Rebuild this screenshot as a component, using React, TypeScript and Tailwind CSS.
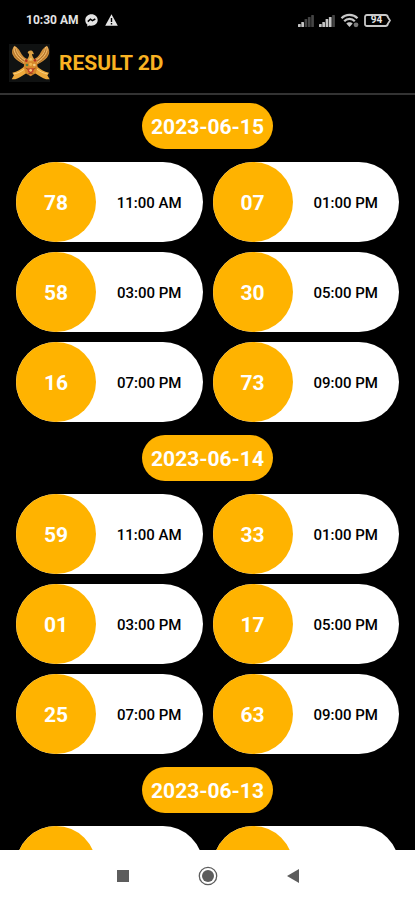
type Result = {
  number: string;
  time: string;
};

type ResultDay = {
  date: string;
  results: Result[];
};

const days: ResultDay[] = [
  {
    date: '2023-06-15',
    results: [
      { number: '78', time: '11:00 AM' },
      { number: '07', time: '01:00 PM' },
      { number: '58', time: '03:00 PM' },
      { number: '30', time: '05:00 PM' },
      { number: '16', time: '07:00 PM' },
      { number: '73', time: '09:00 PM' },
    ],
  },
  {
    date: '2023-06-14',
    results: [
      { number: '59', time: '11:00 AM' },
      { number: '33', time: '01:00 PM' },
      { number: '01', time: '03:00 PM' },
      { number: '17', time: '05:00 PM' },
      { number: '25', time: '07:00 PM' },
      { number: '63', time: '09:00 PM' },
    ],
  },
  {
    date: '2023-06-13',
    results: [
      { number: '', time: '' },
      { number: '', time: '' },
    ],
  },
];

function SignalIcon({ active }: { active: number }) {
  const bars = [3, 5, 8, 10, 12];
  return (
    <svg width="17" height="13" viewBox="0 0 17 13" aria-hidden="true">
      {bars.map((height, i) => (
        <rect
          key={height}
          x={i * 3.3}
          y={13 - height}
          width="2.7"
          height={height}
          rx="0.6"
          fill={i < active ? '#c4c4c4' : '#444444'}
        />
      ))}
    </svg>
  );
}

function StatusBar() {
  return (
    <div className="flex h-10 shrink-0 items-center justify-between pl-[26px] pr-6 text-[#e4e4e4]">
      <div className="flex items-center gap-[7px]">
        <span className="text-xs font-bold">10:30 AM</span>
        <svg width="13" height="13" viewBox="0 0 13 13" aria-hidden="true">
          <path
            d="M6.5 .3C2.9 .3 .3 2.9 .3 6.2c0 1.8.8 3.3 2 4.4v1.9l1.9-1c.7.2 1.5.3 2.3.3 3.6 0 6.2-2.500 6.200-5.700S10.100.3 6.500.3z"
            fill="currentColor"
          />
          <path
            d="M2.800 7.600 5.400 5.200l2 1.400 2.900-1.600"
            fill="none"
            stroke="#000"
            strokeWidth="1.500"
          />
        </svg>
        <svg width="13" height="12" viewBox="0 0 13 12" aria-hidden="true">
          <path d="M6.500 .3 12.800 11.700H.2z" fill="currentColor" />
          <path d="M6.500 4v4M6.500 9v1.400" stroke="#000" strokeWidth="1.400" />
        </svg>
      </div>

      <div className="flex items-center gap-1">
        <SignalIcon active={2} />
        <SignalIcon active={4} />
        <svg width="20" height="15" viewBox="0 0 20 15" aria-hidden="true">
          <g fill="none" stroke="#c8c8c8" strokeWidth="2.200">
            <path d="M1.500 5.200C5.800 .7 13.200 .7 17.500 5.200" />
            <path d="M4.200 8.200C7 5.200 12 5.200 14.800 8.200" />
          </g>
          <path d="M6.300 10.600c1.700-1.800 4.700-1.800 6.400 0L9.500 14z" fill="#c8c8c8" />
          <circle cx="16" cy="11.800" r="2.400" fill="#777" />
        </svg>
        <div className="relative flex h-[13px] w-[27px] items-center justify-center">
          <svg
            className="absolute inset-0"
            width="27"
            height="13"
            viewBox="0 0 27 13"
            aria-hidden="true"
          >
            <path
              d="M3 1h18.500c1.500 0 2.200 1 2.500 2.500l2 3-2 3C23.700 11 23 12 21.500 12H3c-1.400 0-2-.8-2-2V3c0-1.200.6-2 2-2z"
              fill="none"
              stroke="#c8c8c8"
              strokeWidth="1.800"
            />
          </svg>
          <span className="pr-[2px] text-[10px] leading-none font-bold">94</span>
        </div>
      </div>
    </div>
  );
}

function EagleWing() {
  return (
    <g>
      <path
        d="M17 5C9 13 7 25 12 34C16 43 24 50 36 56L50 64L56 46C48 42 42 38 38 31C34 22 28 12 17 5z"
        fill="#d08f3a"
      />
      <path
        d="M16 8C13 24 22 38 46 56M20 9C21 24 31 38 50 49"
        fill="none"
        stroke="#f0bd70"
        strokeWidth="3"
      />
      <path
        d="M12 20C15 36 27 47 42 56M19 14C21 30 31 42 46 51"
        fill="none"
        stroke="#8f541c"
        strokeWidth="1.500"
      />
    </g>
  );
}

function RibbonEnd() {
  return (
    <g>
      <path d="M48 66C36 76 25 84 10 86l5 8-7 12c12 1 24-5 32-11l14-9z" fill="#eda93c" />
      <path d="M14 90c13-2 25-8 36-18" fill="none" stroke="#fbd68c" strokeWidth="2.500" />
    </g>
  );
}

function EagleLogo() {
  return (
    <svg width="41" height="38" viewBox="0 0 123 114" role="img" aria-label="Result 2D logo">
      <rect width="123" height="114" fill="#101212" />
      <EagleWing />
      <g transform="translate(130 0) scale(-1 1)">
        <EagleWing />
      </g>
      {/* Head and neck */}
      <path
        d="M56 26c2-7 12-9 16-2l3 7-6-1c0 7 5 11 8 18l2 14H51l2-14c4-6 8-10 7-18z"
        fill="#dda243"
      />
      <RibbonEnd />
      <g transform="translate(130 0) scale(-1 1)">
        <RibbonEnd />
      </g>
      {/* Shield */}
      <path d="M47 52h36l3 18-6 18-15 9-15-9-6-18z" fill="#d8892c" />
      <circle cx="52" cy="50" r="4" fill="#b8321c" />
      <circle cx="78" cy="49" r="4" fill="#b8321c" />
      <circle cx="65" cy="46" r="4" fill="#f3c46b" />
      <circle cx="54" cy="63" r="4" fill="#578044" />
      <circle cx="76" cy="63" r="4" fill="#f6cf82" />
      <circle cx="65" cy="61" r="5" fill="#f0b24c" />
      <path d="M55 73h20l-2 10-8 7-8-7z" fill="#c7472b" />
      <circle cx="65" cy="79" r="4" fill="#f6ce77" />
      <path d="M50 72l7 4M80 72l-7 4M56 91l9-4 9 4" fill="none" stroke="#713713" strokeWidth="2" />
    </svg>
  );
}

function ResultCard({ result }: { result: Result }) {
  return (
    <li className="flex h-20 items-center rounded-full bg-white">
      <span className="flex size-20 shrink-0 items-center justify-center rounded-full bg-[#ffb300] pt-1 text-[21px] font-bold text-white">
        {result.number}
      </span>
      <span className="flex-1 pt-[2px] text-center text-[15px] font-medium text-black">
        {result.time}
      </span>
    </li>
  );
}

function NavigationBar() {
  return (
    <nav className="flex h-[50px] shrink-0 items-center justify-center gap-[61px] bg-white pt-[2px] text-[#5d5d5d]">
      <button type="button" aria-label="Recent apps" className="flex size-6 items-center justify-center">
        <svg width="12" height="12" viewBox="0 0 12 12">
          <rect width="12" height="12" fill="currentColor" />
        </svg>
      </button>
      <button type="button" aria-label="Home" className="flex size-6 items-center justify-center">
        <svg width="20" height="20" viewBox="0 0 20 20">
          <circle cx="10" cy="10" r="8.700" fill="none" stroke="currentColor" strokeWidth="1.300" />
          <circle cx="10" cy="10" r="6" fill="currentColor" />
        </svg>
      </button>
      <button type="button" aria-label="Back" className="flex size-6 items-center justify-center">
        <svg width="12" height="14" viewBox="0 0 12 14">
          <path d="M12 0v14L0 7z" fill="currentColor" />
        </svg>
      </button>
    </nav>
  );
}

export default function App() {
  return (
    <div className="flex h-screen flex-col bg-black font-['Roboto',sans-serif]">
      <StatusBar />

      {/* Header */}
      <header className="flex h-[55px] shrink-0 items-center gap-[9px] border-b-2 border-[#333333] px-[9px] pb-2">
        <EagleLogo />
        <h1 className="pt-[2px] text-[21px] font-bold text-[#f9b222]">RESULT 2D</h1>
      </header>

      {/* Results by day */}
      <main className="flex min-h-0 flex-1 flex-col gap-[13px] overflow-y-auto px-4 pt-2 [scrollbar-width:none]">
        {days.map((day) => (
          <section key={day.date} className="flex shrink-0 flex-col items-center gap-[13px]">
            <h2 className="flex h-[46px] items-center rounded-full bg-[#ffb300] px-[9px] pt-1 text-[21px] font-bold text-white">
              {day.date}
            </h2>
            <ul className="grid w-full grid-cols-2 gap-[10px]">
              {day.results.map((result, i) => (
                <ResultCard key={i} result={result} />
              ))}
            </ul>
          </section>
        ))}
      </main>

      <NavigationBar />
    </div>
  );
}
